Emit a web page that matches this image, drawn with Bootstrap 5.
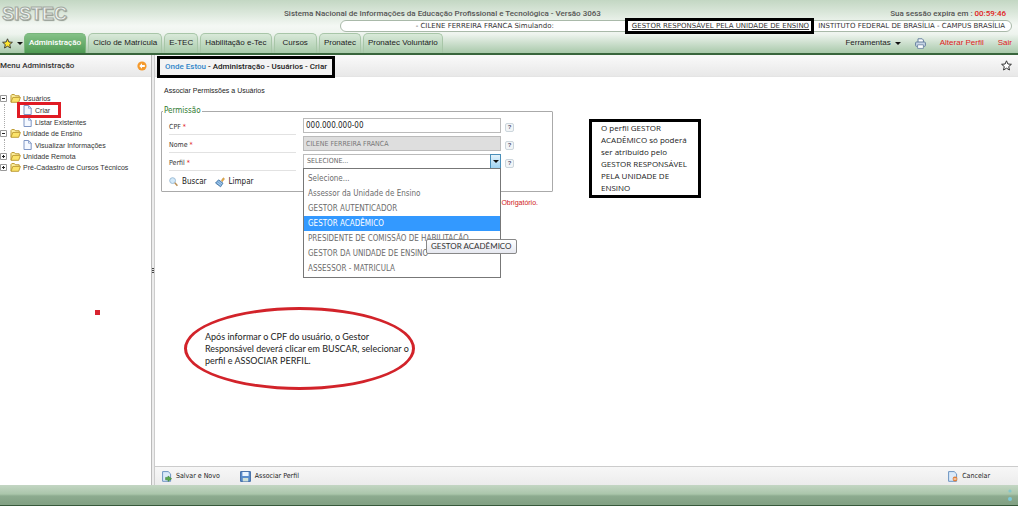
<!DOCTYPE html>
<html lang="pt-BR">
<head>
<meta charset="utf-8">
<meta name="viewport" content="width=device-width, initial-scale=1">
<title>SISTEC - Associar Permissões a Usuários</title>
<link href="https://cdn.jsdelivr.net/npm/bootstrap@5.3.0/dist/css/bootstrap.min.css" rel="stylesheet">
<style>
:root{--ui:"Liberation Sans",Arial,sans-serif;--form:"DejaVu Sans Condensed","DejaVu Sans",sans-serif}
body{font:8px/12px var(--ui);color:#333;padding-right:6px;background:#fff}
a{color:inherit;text-decoration:none}
svg{display:block;flex:none}
.semi{font-family:Roboto,sans-serif;font-weight:500}
.topbar{background:linear-gradient(#c3d7c3 0,#d9e6d9 12px,#f4f8f4 26px,#eef4ee 34px,#a9c9ab 53px);border-bottom:2px solid #38653c;height:55px}
.titlerow{height:20px}
.brand{width:284px;height:20px;padding:5px 0 0 2px;font:bold 18px/19px var(--ui);color:#f2f5f2;-webkit-text-stroke:1px #a3aaa3}
.brand span{text-shadow:1px 1px 1px #8c958c}
.pill{height:12px;width:66%;border:1px solid #a9b9a9;border-radius:6px;background:#fff;font:7px/11px "DejaVu Sans",sans-serif;color:#333;padding-right:6px;white-space:nowrap}
.simul{margin-right:78px}
.framed{position:relative;text-decoration:underline;text-underline-offset:1px;margin-right:9px}
.framed::after{content:"";position:absolute;inset:-3px -5px -3px -7px;border:3px solid #000}
.tabs{height:21px;padding-top:1px}
.tabs .star{width:24px;padding-left:2px}
.caret{width:0;height:0;border:3px solid transparent;border-top-color:#111;border-bottom:0}
.tab{height:20px;line-height:18px;padding:0 4px;border:1px solid #a8c6a8;border-bottom:0;border-radius:5px 5px 0 0;background:linear-gradient(#d9e9d9,#a9cbab);color:#222;white-space:nowrap}
.tab.wide{padding:0 8px}
.tab.on{background:linear-gradient(#84c187,#4f9a53);border-color:#79b57c;color:#fff}
.tools{gap:14px;padding:0 6px 4px 0;color:#222}
.red{color:#e02020}
.side{width:152px;border-right:1px solid #bbb}
.strip{height:22px;background:linear-gradient(#fafafa,#e8e8e8);border-bottom:1px solid #e4e4e4}
.split{width:3px;background:#ececec;border-right:1px solid #ccc}
.grip{width:2px;height:5px;background:repeating-linear-gradient(#444 0 1px,#ddd 1px 2px)}
.crumbs{height:22px;margin-left:2px;border:3px solid #000;padding:0 5px;background:#f3f3f3;color:#222;position:relative;top:1px}
.crumbs a{color:#2f86c9}
.tree{font:7px/11px var(--ui);margin:16px 0 0;padding:0;list-style:none}
.tree ul{list-style:none;margin:0 0 0 4px;padding:0 0 0 11px;border-left:1px dotted #aaa}
.tree .leaf{height:12px;gap:3px;padding-left:7px;white-space:nowrap}
.tree .knot{height:11px;gap:2px}
.tree .knot svg+svg{margin-left:1px}
.pick{position:relative}
.pick::after{content:"";position:absolute;left:1px;top:-2px;width:44px;height:16px;border:3px solid #e01b24}
.work{padding:8px 6px 0}
.box{width:392px;max-width:100%;margin:0;padding:0 7px 3px;border:1px solid #aaa;border-radius:1px;font:8px/12px var(--form)}
.box legend{float:none;width:auto;font:8px/12px var(--form);color:#2f7a2f;margin:0 0 1px -6px;padding:0 1px}
.line{height:18px}
.line label{width:127px;height:17px;line-height:16px;margin-right:7px;border-bottom:1px solid #e2e2e2;padding-top:1px;font-size:7px}
.field{width:198px;height:15px;border:1px solid #bbb;border-radius:0;padding:0 2px;font:8px/13px var(--form);color:#222;background:#fff;appearance:none;display:block}
.field:disabled{font-size:7px;background:#dedede;color:#777;opacity:1}
select.field{font-size:7px;color:#666;padding-left:3px}
.help{width:9px;height:9px;border:1px solid #ccd6dc;background:#f2f5f7;border-radius:2px;font:bold 6px/7px var(--ui);color:#557;margin-left:4px;padding:0}
.drop{position:absolute;right:0;top:0;width:11px;height:15px;background:linear-gradient(#e3f3fc,#9fd3f2);border:1px solid #4a8fb9;pointer-events:none}
.choices{position:absolute;left:0;top:14px;width:198px;margin:0;padding:2px 0 1px;list-style:none;border:1px solid #777;background:#fff;z-index:3;color:#6c6c6c;font:8px/15px var(--form);white-space:nowrap}
.choices li{padding:0 4px}
.choices .sel{background:#3399ff;color:#fff}
.hint{position:absolute;left:122px;top:70px;height:15px;border:1px solid #888;border-radius:2px;background:linear-gradient(#fff,#e6e8f0);color:#333;font:8px/13px Lato,sans-serif}
.act{border:0;background:none;padding:0;font:8px/12px var(--form);color:#222;gap:4px}
.actions{height:19px;background:linear-gradient(#f7f7f7,#ececec);border-top:1px solid #ccc;padding:0 20px 0 7px}
.actions .act{font-size:7px;gap:4px}
.actions .gap-after{margin-right:20px}
.req{width:377px;text-align:right;color:#d02020;font:7px/12px var(--ui);margin-top:5px}
.foot{height:21px;background:linear-gradient(#c3d6c3 0,#abc6ab 9px,#8dab8f 11px,#83a285 18px);border-bottom:1px solid #36583a}
.note{position:absolute;left:434px;top:64px;width:112px;border:3px solid #000;background:#fff;padding:0 0 1px 9px;font:8px/12px "Open Sans",sans-serif;color:#222;white-space:nowrap}
.oval{position:absolute;left:29px;top:252px;width:231px;height:83px;border:3px solid #d2232a;border-radius:50%;font:9px/12px Lato,sans-serif;color:#222;white-space:nowrap;padding-left:18px}
.dot{position:absolute;left:95px;top:310px;width:5px;height:5px;background:#d8232f}
</style>
</head>
<body class="d-flex flex-column min-vh-100 position-relative">
<svg width="0" height="0" class="position-absolute">
  <symbol id="folder" viewBox="0 0 11 9"><path d="M1 8V1.5L1.8.6h2.6l1 1.2h3.8V3" fill="#fff3a5" stroke="#b9952a"/><path d="M1 8.3 2.8 3.4h7.6L8.7 8.3z" fill="#fbe36a" stroke="#b9952a" stroke-width=".9"/></symbol>
  <symbol id="page" viewBox="0 0 9 10"><path d="M1 .5h4.6L8.2 3v6.5H1z" fill="#f4f8ff" stroke="#7f96c4"/><path d="M5.5.6V3.2h2.6" fill="none" stroke="#7f96c4" stroke-width=".8"/></symbol>
  <symbol id="minus" viewBox="0 0 7 7"><path d="M.5.5h6v6h-6z" fill="#fff" stroke="#999"/><path d="M2 3.5h3" stroke="#222"/></symbol>
  <symbol id="plus" viewBox="0 0 7 7"><path d="M.5.5h6v6h-6z" fill="#fff" stroke="#999"/><path d="M2 3.5h3M3.5 2v3" stroke="#222"/></symbol>
</svg>

<header class="topbar">
  <div class="titlerow d-flex">
    <div class="brand"><span>SISTEC</span></div>
    <div class="semi pt-1 mt-1" style="color:#555">Sistema Nacional de Informações da Educação Profissional e Tecnológica - Versão 3063</div>
    <div class="semi ms-auto pt-1 mt-1 me-2 pe-1" style="color:#555">Sua sessão expira em : <span class="red">00:59:46</span></div>
  </div>
  <div class="pill d-flex justify-content-end ms-auto" style="margin-right:6px">
    <span class="simul">- CILENE FERREIRA FRANCA Simulando:</span>
    <a href="#" class="framed">GESTOR RESPONSÁVEL PELA UNIDADE DE ENSINO</a>
    <span>INSTITUTO FEDERAL DE BRASÍLIA - CAMPUS BRASÍLIA</span>
  </div>
  <nav class="tabs d-flex align-items-end">
    <a href="#" class="star d-flex align-items-center gap-1 pb-1" aria-label="Favoritos">
      <svg width="11" height="11" viewBox="0 0 11 11"><path d="M5.5.8 6.9 4l3.5.3-2.7 2.3.8 3.4-3-1.8-3 1.8.8-3.4L.6 4.3 4.1 4z" fill="#ffe62e" stroke="#333" stroke-width=".9"/></svg>
      <span class="caret"></span></a>
    <div class="d-flex" style="gap:2px">
      <a href="#" class="tab on semi">Administração</a>
      <a href="#" class="tab">Ciclo de Matrícula</a>
      <a href="#" class="tab">E-TEC</a>
      <a href="#" class="tab">Habilitação e-Tec</a>
      <a href="#" class="tab wide">Cursos</a>
      <a href="#" class="tab">Pronatec</a>
      <a href="#" class="tab">Pronatec Voluntário</a>
    </div>
    <div class="tools d-flex align-items-center ms-auto">
      <a href="#" class="d-flex align-items-center gap-1">Ferramentas <span class="caret"></span></a>
      <a href="#" aria-label="Imprimir"><svg width="11" height="11" viewBox="0 0 11 11"><path d="M3 4V.8h4.2L8.4 2V4" fill="#fff" stroke="#66809f"/><rect x=".6" y="4" width="9.8" height="4.4" rx="1" fill="#c9d6e6" stroke="#66809f"/><path d="M2.6 6.8h5.8v3.6H2.6z" fill="#fff" stroke="#66809f" stroke-width=".8"/></svg></a>
      <a href="#" class="red">Alterar Perfil</a>
      <a href="#" class="red">Sair</a>
    </div>
  </nav>
</header>

<div class="d-flex flex-grow-1">
  <aside class="side flex-shrink-0">
    <div class="strip d-flex align-items-center justify-content-between pe-1">
      <span class="semi">Menu Administração</span>
      <svg width="10" height="10" viewBox="0 0 10 10"><circle cx="5" cy="5" r="4.6" fill="#f59a2c"/><path d="M5 2.2 2.3 5 5 7.8V6h2.8V4H5z" fill="#fff"/></svg>
    </div>
    <ul class="tree">
      <li><div class="knot d-flex align-items-center"><svg width="7" height="7"><use href="#minus"/></svg><svg width="11" height="9"><use href="#folder"/></svg><a href="#">Usuários</a></div>
        <ul>
          <li class="leaf d-flex align-items-center pick"><svg width="9" height="10"><use href="#page"/></svg><a href="#">Criar</a></li>
          <li class="leaf d-flex align-items-center"><svg width="9" height="10"><use href="#page"/></svg><a href="#">Listar Existentes</a></li>
        </ul></li>
      <li><div class="knot d-flex align-items-center"><svg width="7" height="7"><use href="#minus"/></svg><svg width="11" height="9"><use href="#folder"/></svg><a href="#">Unidade de Ensino</a></div>
        <ul>
          <li class="leaf d-flex align-items-center"><svg width="9" height="10"><use href="#page"/></svg><a href="#">Visualizar Informações</a></li>
        </ul></li>
      <li class="knot d-flex align-items-center"><svg width="7" height="7"><use href="#plus"/></svg><svg width="11" height="9"><use href="#folder"/></svg><a href="#">Unidade Remota</a></li>
      <li class="knot d-flex align-items-center"><svg width="7" height="7"><use href="#plus"/></svg><svg width="11" height="9"><use href="#folder"/></svg><a href="#">Pré-Cadastro de Cursos Técnicos</a></li>
    </ul>
  </aside>
  <div class="split d-flex align-items-center flex-shrink-0"><span class="grip"></span></div>

  <main class="flex-grow-1 d-flex flex-column position-relative">
    <div class="strip d-flex justify-content-between align-items-center pe-1">
      <div class="crumbs semi d-flex align-items-center"><span><a href="#">Onde Estou</a> - Administração - Usuários - Criar</span></div>
      <svg style="margin-right:2px" width="11" height="11" viewBox="0 0 11 11"><path d="M5.5.8 6.9 4l3.5.3-2.7 2.3.8 3.4-3-1.8-3 1.8.8-3.4L.6 4.3 4.1 4z" fill="#fff" stroke="#333"/></svg>
    </div>
    <div class="work flex-grow-1">
      <div style="font-size:7px;color:#222;padding-left:3px">Associar Permissões a Usuários</div>
      <fieldset class="box mt-2">
        <legend>Permissão</legend>
        <div class="line d-flex"><label for="cpf">CPF <span class="red">*</span></label><input id="cpf" class="field" value="000.000.000-00"><button class="help align-self-center">?</button></div>
        <div class="line d-flex"><label for="nome">Nome <span class="red">*</span></label><input id="nome" class="field" value="CILENE FERREIRA FRANCA" disabled><button class="help align-self-center">?</button></div>
        <div class="line d-flex"><label for="perfil">Perfil <span class="red">*</span></label>
          <div class="position-relative">
            <select id="perfil" class="field"><option>SELECIONE...</option></select>
            <span class="drop d-flex align-items-center justify-content-center"><span class="caret"></span></span>
            <ul class="choices">
              <li>Selecione...</li>
              <li>Assessor da Unidade de Ensino</li>
              <li>GESTOR AUTENTICADOR</li>
              <li class="sel">GESTOR ACADÊMICO</li>
              <li>PRESIDENTE DE COMISSÃO DE HABILITAÇÃO</li>
              <li>GESTOR DA UNIDADE DE ENSINO</li>
              <li>ASSESSOR - MATRICULA</li>
              <li class="hint">GESTOR ACADÊMICO</li>
            </ul>
          </div><button class="help align-self-center">?</button></div>
        <div class="d-flex gap-2 pt-1">
          <button class="act d-flex align-items-center"><svg width="9" height="10" viewBox="0 0 9 10"><circle cx="3.6" cy="3.6" r="2.9" fill="#d3e9f9" stroke="#9dbdd6"/><path d="m5.8 5.8 2.6 3" stroke="#b98f55" stroke-width="1.5"/></svg>Buscar</button>
          <button class="act d-flex align-items-center"><svg width="10" height="11" viewBox="0 0 10 11"><path d="m6.3 3.6 2-2.8 1.2 1-2.2 2.9z" fill="#f0b347" stroke="#a87428" stroke-width=".5"/><path d="M3.6 2.8 8 6.2 5.6 9.8.5 6z" fill="#6ea3d6" stroke="#41729f" stroke-width=".8"/><path d="m2.2 5.6 4 3M3.3 4.2l4 3" stroke="#cfe4f6" stroke-width=".7"/></svg>Limpar</button>
        </div>
      </fieldset>
      <div class="req">Obrigatório.</div>
    </div>
    <div class="note">O perfil GESTOR<br>ACADÊMICO só poderá<br>ser atribuído pelo<br>GESTOR RESPONSÁVEL<br>PELA UNIDADE DE<br>ENSINO</div>
    <div class="oval d-flex align-items-center"><span>Após informar o CPF do usuário, o Gestor<br>Responsável deverá clicar em BUSCAR, selecionar o<br>perfil e ASSOCIAR PERFIL.</span></div>
    <div class="actions d-flex align-items-center">
      <button class="act gap-after d-flex align-items-center"><svg width="10" height="11" viewBox="0 0 10 11"><path d="M.6.6h5.6l2.4 2.3v7.4h-8z" fill="#dbeafa" stroke="#6d94c2"/><path d="M3.6 8.8V6.4H6V5l3.6 2.7L6 10.4V8.8z" fill="#58ab4d" stroke="#33772c" stroke-width=".5"/></svg>Salvar e Novo</button>
      <button class="act d-flex align-items-center"><svg width="11" height="11" viewBox="0 0 11 11"><path d="M.6.6h9.8v9.8H.6z" fill="#5a8dcc" stroke="#3f6ba6"/><path d="M2.4 1h6.2v4H2.4z" fill="#eaf4ff"/><path d="M2.8 7h5.4v3.4H2.8z" fill="#cfe0d8"/></svg>Associar Perfil</button>
      <button class="act d-flex align-items-center ms-auto me-2"><svg width="10" height="11" viewBox="0 0 10 11"><path d="M.6.6h5.6l2.4 2.3v7.4h-8z" fill="#dbeafa" stroke="#6d94c2"/><circle cx="7" cy="8" r="2.4" fill="#e0803c"/><path d="M5.6 8h2.8" stroke="#fff"/></svg>Cancelar</button>
    </div>
  </main>
</div>
<footer class="foot d-flex flex-column align-items-end justify-content-center" style="padding-right:6px"><svg width="4" height="14" viewBox="0 0 4 14"><circle cx="2" cy="3" r="1.6" fill="#86c6c9"/><circle cx="2" cy="11" r="2" fill="#7cc8d8"/></svg></footer>
<div class="dot"></div>
<script src="https://cdn.jsdelivr.net/npm/bootstrap@5.3.0/dist/js/bootstrap.bundle.min.js"></script>
</body>
</html>
